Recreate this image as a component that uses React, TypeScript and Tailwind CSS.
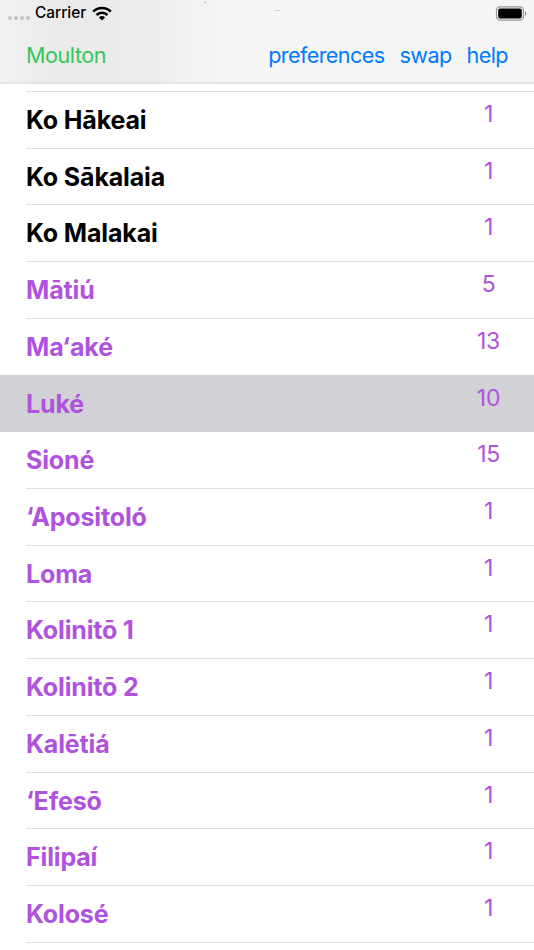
import { useState } from "react";

interface Book {
  name: string;
  count: number;
  old?: boolean;
}

const books: Book[] = [
  { name: "Ko Hākeai", count: 1, old: true },
  { name: "Ko Sākalaia", count: 1, old: true },
  { name: "Ko Malakai", count: 1, old: true },
  { name: "Mātiú", count: 5 },
  { name: "Ma‘aké", count: 13 },
  { name: "Luké", count: 10 },
  { name: "Sioné", count: 15 },
  { name: "‘Apositoló", count: 1 },
  { name: "Loma", count: 1 },
  { name: "Kolinitō 1", count: 1 },
  { name: "Kolinitō 2", count: 1 },
  { name: "Kalētiá", count: 1 },
  { name: "‘Efesō", count: 1 },
  { name: "Filipaí", count: 1 },
  { name: "Kolosé", count: 1 },
];

function StatusBar() {
  return (
    <div className="flex h-[26px] items-center pl-2 pr-[7px]">
      {/* No signal */}
      <div className="mt-[9px] flex gap-[2px]">
        {[0, 1, 2, 3].map((i) => (
          <span key={i} className="h-1 w-1 rounded-full bg-[#c3c3c4]" />
        ))}
      </div>
      <span className="ml-[5px] text-[15.4px] leading-[26px] font-medium text-black">Carrier</span>
      <svg className="ml-[6px] h-[15px] w-5" viewBox="0 0 20 15" fill="none" stroke="black" strokeWidth="2.7">
        <path d="M1.2 5.6a12.6 12.6 0 0 1 17.6 0" />
        <path d="M4.5 9a7.9 7.9 0 0 1 11 0" />
        <path d="M10 14.6 6.9 11.4a4.5 4.5 0 0 1 6.2 0Z" fill="black" stroke="none" />
      </svg>
      <svg className="ml-auto h-[15px] w-8" viewBox="0 0 32 15">
        <rect x="1.5" y="0.8" width="27" height="13.4" rx="3.8" fill="none" stroke="#969696" strokeWidth="1.2" />
        <rect x="3.2" y="2.5" width="23.6" height="10" rx="2" fill="black" />
        <path d="M30 5.2c1.7.6 1.7 4 0 4.6Z" fill="#969696" />
      </svg>
    </div>
  );
}

export default function App() {
  const [selected, setSelected] = useState("Luké");

  return (
    <div className="h-[950px] w-[534px] overflow-hidden bg-white font-['Inter',sans-serif]">
      <header className="relative h-[84px] border-b-2 border-[#e4e4e4] bg-[#f5f5f5] bg-[linear-gradient(90deg,#f1f1f1_0px,#eaeaea_60px,#ececec_150px,#f1f1f1_185px,#f5f5f5_235px)]">
        <StatusBar />
        <nav className="flex h-[58px] items-center pl-[26px] pr-[26px] text-[21.6px] tracking-[-0.45px]">
          <button className="text-[#34c759]">Moulton</button>
          <div className="ml-auto flex gap-[15px] tracking-[-0.6px] text-[#007aff]">
            <button>preferences</button>
            <button>swap</button>
            <button>help</button>
          </div>
        </nav>
        <span className="absolute top-[2px] left-[204px] h-px w-[2px] bg-[#b5b5b5]" />
        <span className="absolute top-[10px] left-[275px] h-px w-[5px] bg-[#cbcbcb]" />
      </header>

      <div className="ml-[26px] h-2 border-b border-[#e2e2e3]" />
      <ul>
        {books.map((book) => (
          <li
            key={book.name}
            onClick={() => setSelected(book.name)}
            className={`pl-[26px] ${
              selected === book.name ? "-mt-px h-[57.73px] bg-[#d1d1d6] pt-px" : "h-[56.73px]"
            }`}
          >
            <div
              className={`flex h-full justify-between border-b ${
                selected === book.name ? "border-[#d1d1d6]" : "border-[#e2e2e3]"
              }`}
            >
              <span
                className={`text-[25px] leading-[57px] font-[650] tracking-[-0.15px] ${
                  book.old ? "text-black" : "text-[#af52de]"
                }`}
              >
                {book.name}
              </span>
              <span className="mr-[15px] w-[61px] text-center text-[23px] leading-[44px] font-normal tracking-[-0.3px] text-[#af52de]">
                {book.count}
              </span>
            </div>
          </li>
        ))}
      </ul>
    </div>
  );
}
